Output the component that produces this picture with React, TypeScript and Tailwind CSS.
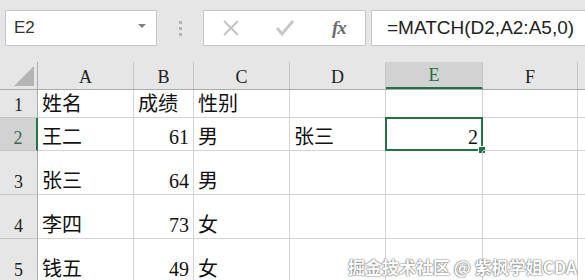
import React from 'react';

const cols = [
  { key: 'A', w: 'w-[96px]' },
  { key: 'B', w: 'w-[60px]' },
  { key: 'C', w: 'w-[96px]' },
  { key: 'D', w: 'w-[96px]' },
  { key: 'E', w: 'w-[97px]' },
  { key: 'F', w: 'w-[95px]' },
];

const rows = [
  { n: '1', h: 'h-[28px]', cells: ['姓名', '成绩', '性别', '', '', ''] },
  { n: '2', h: 'h-[33px]', cells: ['王二', '61', '男', '张三', '2', ''] },
  { n: '3', h: 'h-[44px]', cells: ['张三', '64', '男', '', '', ''] },
  { n: '4', h: 'h-[44px]', cells: ['李四', '73', '女', '', '', ''] },
  { n: '5', h: 'h-[44px]', cells: ['钱五', '49', '女', '', '', ''] },
];

const isNum = (v: string) => /^\d+$/.test(v);

const Toolbar: React.FC = () => (
  <div className="h-[62px] bg-[#e6e6e6] flex items-start pt-[10px] pl-[5px]">
    <div className="w-[152px] h-[36px] bg-white border border-[#c6c6c6] flex items-center justify-between pl-[8px] pr-[10px]">
      <span className="text-[17px] text-[#333] font-['Liberation_Sans',sans-serif]">E2</span>
      <span className="w-0 h-0 border-l-[4px] border-r-[4px] border-t-[4px] border-l-transparent border-r-transparent border-t-[#808080] mb-[4px]" />
    </div>
    <div className="w-[46px] h-[36px] flex flex-col items-center justify-center gap-[3px]">
      <span className="w-[3px] h-[3px] bg-[#b4b4b4]" />
      <span className="w-[3px] h-[3px] bg-[#b4b4b4]" />
      <span className="w-[3px] h-[3px] bg-[#b4b4b4]" />
    </div>
    <div className="w-[163px] h-[36px] bg-white border border-[#c6c6c6] flex items-center">
      <svg width="18" height="18" viewBox="0 0 18 18" className="ml-[18px]">
        <path d="M2 2 L16 16 M16 2 L2 16" stroke="#c3c3c3" strokeWidth="2" fill="none" />
      </svg>
      <svg width="18" height="16" viewBox="0 0 18 16" className="ml-[36px]">
        <path d="M1 8 L6 14 L17 1" stroke="#c8c8c8" strokeWidth="3" fill="none" />
      </svg>
      <span className="ml-[38px] text-[19px] italic text-[#6b6b6b] font-['Liberation_Serif',serif] font-semibold tracking-[-1px]">fx</span>
    </div>
    <div className="ml-[5px] flex-1 h-[36px] bg-white border border-[#c6c6c6] border-r-0 flex items-center pl-[15px]">
      <span className="text-[19px] text-[#222] font-['Liberation_Sans',sans-serif] whitespace-nowrap">=MATCH(D2,A2:A5,0)</span>
    </div>
  </div>
);

const App: React.FC = () => {
  return (
    <div className="w-[585px] h-[280px] overflow-hidden bg-white relative font-['Liberation_Serif','Noto_Sans_CJK_SC',serif]">
      <Toolbar />
      {/* column headers */}
      <div className="flex h-[28px] bg-[#e6e6e6] border-b border-[#ababab]">
        <div className="w-[38px] shrink-0 border-r border-[#ababab] flex items-end justify-end pr-[3px] pb-[3px]">
          <svg width="20" height="20" viewBox="0 0 20 20">
            <path d="M20 0 L20 20 L0 20 Z" fill="#b4b4b4" />
          </svg>
        </div>
        {cols.map((c) => (
          <div
            key={c.key}
            className={`${c.w} shrink-0 border-r border-[#c6c6c6] flex items-end justify-center text-[18px] leading-[22px] pb-[1px] ${
              c.key === 'E' ? 'bg-[#d2d2d2] text-[#217346] border-b-2 border-b-[#217346]' : 'text-[#222]'
            }`}
          >
            {c.key}
          </div>
        ))}
        <div className="flex-1" />
      </div>
      {/* rows */}
      {rows.map((r) => (
        <div key={r.n} className={`flex ${r.h} shrink-0`}>
          <div
            className={`w-[38px] shrink-0 border-b border-[#c6c6c6] flex items-end justify-center text-[18px] leading-[22px] pb-[1px] ${
              r.n === '2'
                ? 'bg-[#d2d2d2] text-[#3a6b50] border-r-2 border-r-[#217346]'
                : 'bg-[#e6e6e6] text-[#222] border-r border-r-[#ababab]'
            }`}
          >
            {r.n}
          </div>
          {cols.map((c, i) => {
            const v = r.cells[i];
            const sel = r.n === '2' && c.key === 'E';
            return (
              <div
                key={c.key}
                className={`${c.w} shrink-0 relative border-r border-b border-[#d4d4d4] flex items-end px-[4px] pb-[1px] text-[20px] leading-[24px] text-[#111] whitespace-nowrap ${
                  isNum(v) ? 'justify-end' : 'justify-start'
                }`}
              >
                {v}
                {sel && (
                  <>
                    <div className="absolute -left-[1px] -top-[1px] -right-[1px] -bottom-[1px] border-2 border-[#217346]" />
                    <div className="absolute -right-[4px] -bottom-[4px] w-[6px] h-[6px] bg-[#217346] border border-white box-content" />
                  </>
                )}
              </div>
            );
          })}
          <div className="flex-1 border-b border-[#d4d4d4]" />
        </div>
      ))}
      <div className="absolute left-[348px] top-[254px] text-[17px] font-bold text-white whitespace-nowrap font-['Noto_Sans_CJK_SC',sans-serif] [text-shadow:0_0_1px_#555,0_0_2px_#666]">
        掘金技术社区 @ 紫枫学姐CDA
      </div>
    </div>
  );
};

export default App;
